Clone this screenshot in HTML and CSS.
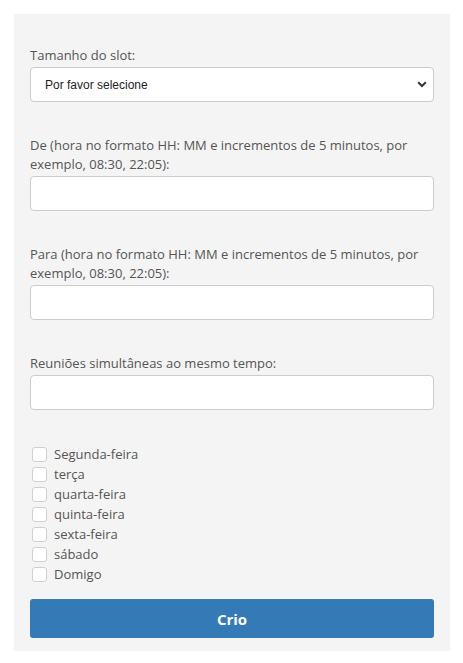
FILE: index.html
```html
<!DOCTYPE html>
<html>
<head>
<meta charset="utf-8">
<link rel="stylesheet" href="styles.css">
</head>
<body>
<div class="panel">
  <div class="group">
    <label class="lbl">Tamanho do slot:</label>
    <div class="select">
      <span>Por favor selecione</span>
      <svg class="chev" width="10" height="7" viewBox="0 0 10 7"><path d="M1.2 1.3 L5 5 L8.8 1.3" fill="none" stroke="#333" stroke-width="2"/></svg>
    </div>
  </div>
  <div class="group">
    <label class="lbl">De (hora no formato HH: MM e incrementos de 5 minutos, por exemplo, 08:30, 22:05):</label>
    <div class="input"></div>
  </div>
  <div class="group">
    <label class="lbl">Para (hora no formato HH: MM e incrementos de 5 minutos, por exemplo, 08:30, 22:05):</label>
    <div class="input"></div>
  </div>
  <div class="group">
    <label class="lbl">Reuniões simultâneas ao mesmo tempo:</label>
    <div class="input"></div>
  </div>
  <div class="checks">
    <div class="check"><span class="box"></span><span>Segunda-feira</span></div>
    <div class="check"><span class="box"></span><span>terça</span></div>
    <div class="check"><span class="box"></span><span>quarta-feira</span></div>
    <div class="check"><span class="box"></span><span>quinta-feira</span></div>
    <div class="check"><span class="box"></span><span>sexta-feira</span></div>
    <div class="check"><span class="box"></span><span>sábado</span></div>
    <div class="check"><span class="box"></span><span>Domigo</span></div>
  </div>
  <div class="btn">Crio</div>
</div>
</body>
</html>
```
FILE: styles.css
```css
html, body { margin: 0; padding: 0; background: #fff; }
body { font-family: "Open Sans", "Liberation Sans", sans-serif; font-size: 13px; color: #555; }
.panel {
  margin: 14px 13px 0 14px;
  background: #f4f4f4;
  padding: 32px 16px 13px 16px;
}
.group { margin-bottom: 34px; }
.lbl { display: block; line-height: 19px; margin-bottom: 2px; }
.select, .input {
  box-sizing: border-box;
  height: 35px;
  background: #fff;
  border: 1px solid #ccc;
  border-radius: 4px;
}
.select {
  display: flex;
  align-items: center;
  justify-content: space-between;
  padding: 0 6px 0 14px;
  font-family: "Liberation Sans", Arial, sans-serif;
  font-size: 12px;
  color: #222;
}
.checks { display: flex; flex-direction: column; margin-top: 0; }
.check { display: flex; align-items: center; height: 20px; }
.box {
  box-sizing: border-box;
  width: 15px; height: 15px;
  border: 1px solid #d0d0d0;
  border-radius: 3px;
  background: #fff;
  margin: 0 7px 0 2px;
}
.btn {
  margin-top: 15px;
  height: 39px;
  background: #337ab7;
  border-radius: 3px;
  color: #fff;
  font-weight: 700;
  font-size: 15px;
  display: flex;
  align-items: center;
  justify-content: center;
}
```
